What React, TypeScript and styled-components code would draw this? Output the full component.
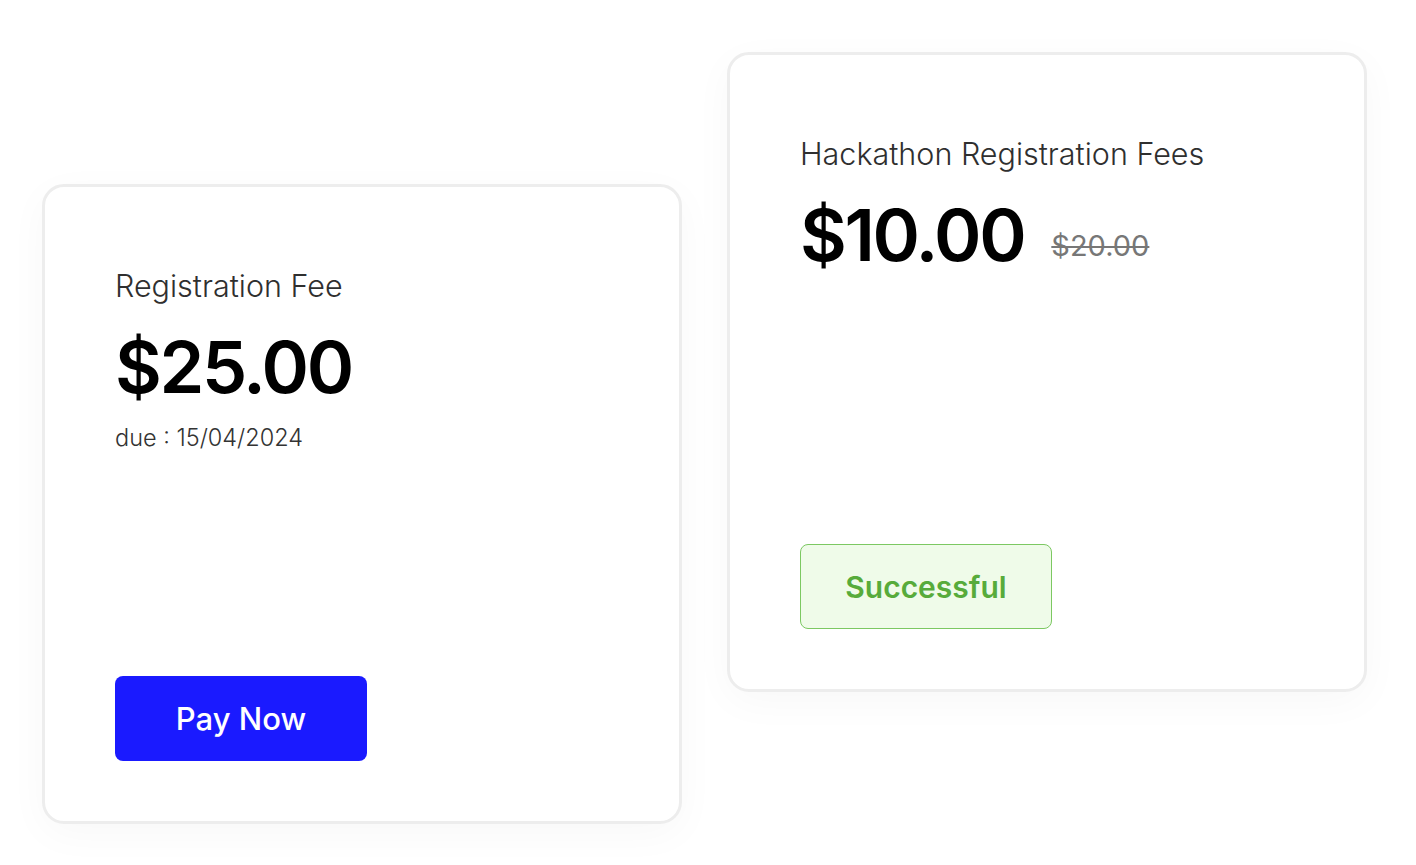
import * as React from 'react'
import styled, {createGlobalStyle} from 'styled-components'

const GlobalStyle = createGlobalStyle`
  html, body {
    margin: 0;
    padding: 0;
    background: #ffffff;
  }
  body {
    font-family: Inter, "Liberation Sans", sans-serif;
    -webkit-font-smoothing: antialiased;
  }
`

// Page holding the two fee cards side by side
const Page = styled.div`
  display: flex;
  align-items: flex-start;
  gap: 45px;
  padding: 52px 0 0 42px;
  width: 1416px;
  height: 865px;
  box-sizing: border-box;
`

interface CardProps {
  $offset?: number
}
const Card = styled.div<CardProps>`
  display: flex;
  flex-direction: column;
  width: 640px;
  height: 640px;
  margin-top: ${({$offset}) => $offset ?? 0}px;
  box-sizing: border-box;
  padding: 79px 70px 60px 70px;
  background: #ffffff;
  border: 3px solid #ededed;
  border-radius: 22px;
  box-shadow: 0 10px 40px rgba(0, 0, 0, 0.03);
`

const Title = styled.div`
  font-size: 30.5px;
  font-weight: 300;
  color: #2f2f2f;
  line-height: 40px;
`

const PriceRow = styled.div`
  display: flex;
  align-items: flex-end;
  gap: 27px;
  margin-top: 19px;
`

const Price = styled.div`
  font-size: 72px;
  font-weight: 600;
  color: #000000;
  letter-spacing: -2.4px;
  line-height: 84px;
`

const OldPrice = styled.s`
  font-size: 29px;
  font-weight: 400;
  line-height: 34px;
  margin-bottom: 14px;
  color: #777777;
  text-decoration-thickness: 2px;
`

const Due = styled.div`
  font-size: 23.5px;
  font-weight: 300;
  color: #333333;
  margin-top: 14px;
`

const Action = styled.div`
  margin-top: auto;
`

const PayButton = styled.button`
  width: 252px;
  height: 85px;
  border: none;
  border-radius: 8px;
  background: #1a1aff;
  color: #ffffff;
  font-family: inherit;
  font-size: 31px;
  font-weight: 500;
  cursor: pointer;
`

const Badge = styled.div`
  display: flex;
  align-items: center;
  justify-content: center;
  width: 252px;
  height: 85px;
  box-sizing: border-box;
  border: 1.5px solid #7cc862;
  border-radius: 8px;
  background: #effbe9;
  color: #57ab3b;
  font-size: 30px;
  font-weight: 600;
`

export default function App() {
  return (
    <>
      <GlobalStyle />
      <Page>
        <Card $offset={132}>
          <Title>Registration Fee</Title>
          <PriceRow>
            <Price>$25.00</Price>
          </PriceRow>
          <Due>due : 15/04/2024</Due>
          <Action>
            <PayButton>Pay Now</PayButton>
          </Action>
        </Card>
        <Card>
          <Title>Hackathon Registration Fees</Title>
          <PriceRow>
            <Price>$10.00</Price>
            <OldPrice>$20.00</OldPrice>
          </PriceRow>
          <Action>
            <Badge>Successful</Badge>
          </Action>
        </Card>
      </Page>
    </>
  )
}
